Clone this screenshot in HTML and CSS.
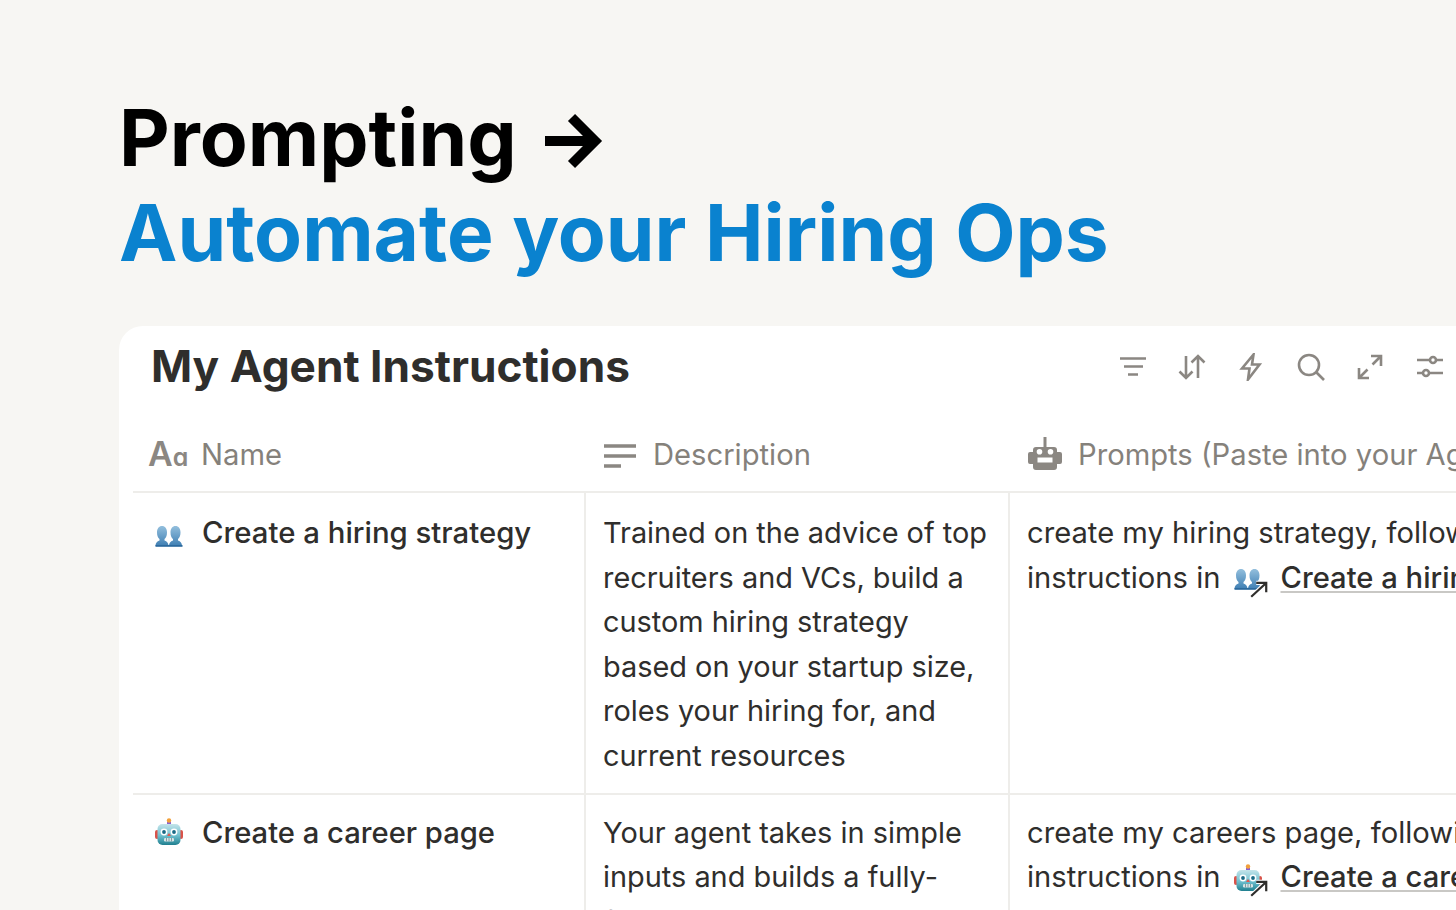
FILE: index.html
```html
<!DOCTYPE html>
<html lang="en">
<head>
    <meta charset="UTF-8">
    <title>Automate your Hiring Ops</title>
    <link rel="stylesheet" href="styles.css">
</head>
<body>
    <svg class="sprites" width="0" height="0">
        <defs>
            <symbol id="busts" viewBox="0 0 28 22">
                <defs>
                    <linearGradient id="bust-fill" x1="0" y1="0" x2="0" y2="1">
                        <stop offset="0" stop-color="#93bfdd"/>
                        <stop offset="1" stop-color="#3f7fb3"/>
                    </linearGradient>
                </defs>
                <path fill="url(#bust-fill)" d="M.5 21c0-3 1.500-4.500 4-5.500v-1.500C3 13 2 10.500 2 7.500 2 3.500 4 1 7 1s5 2.500 5 6.500c0 3-1 5.500-2.500 6.500v1.500c2.500 1 4 2.500 4 5.500z"/>
                <path fill="url(#bust-fill)" d="M14 21c0-3 1.500-4.500 4-5.500v-1.500c-1.500-1-2.500-3.500-2.500-6.500 0-4 2-6.500 5-6.500s5 2.500 5 6.500c0 3-1 5.500-2.500 6.500v1.500c2.500 1 4 2.500 4 5.500z"/>
                <rect x=".5" y="20" width="27" height="1.800" fill="#2c6a9e"/>
            </symbol>
            <symbol id="robot" viewBox="0 0 28 28">
                <defs>
                    <linearGradient id="robot-fill" x1="0" y1="0" x2="0" y2="1">
                        <stop offset="0" stop-color="#c4e4ea"/>
                        <stop offset=".55" stop-color="#6fc0cf"/>
                        <stop offset="1" stop-color="#1f7f8f"/>
                    </linearGradient>
                </defs>
                <rect x="12" y="3.500" width="4" height="3" fill="#8a5fd0"/>
                <circle cx="14" cy="2.500" r="2.200" fill="#f2a03a"/>
                <rect x="0" y="12" width="4" height="9" rx="2" fill="#d9534a"/>
                <rect x="24" y="12" width="4" height="9" rx="2" fill="#d9534a"/>
                <rect x="2.500" y="6" width="23" height="21" rx="5" fill="url(#robot-fill)"/>
                <circle cx="9" cy="14" r="3.400" fill="#fff"/>
                <circle cx="19" cy="14" r="3.400" fill="#fff"/>
                <circle cx="9" cy="14" r="1.900" fill="#1a6a86"/>
                <circle cx="19" cy="14" r="1.900" fill="#1a6a86"/>
                <path d="M14 15l2 3h-4z" fill="#e0574f"/>
                <rect x="9" y="20" width="10" height="3.400" rx="1.200" fill="#d7e4e6"/>
                <path d="M11.500 20v3.400M14 20v3.400M16.500 20v3.400" stroke="#6b8a90" stroke-width=".8"/>
            </symbol>
            <symbol id="link-arrow" viewBox="0 0 18 16">
                <path d="M2 15L15 3M6.500 2.500H15.500V11" fill="none" stroke="#fff" stroke-width="4"/>
                <path d="M2 15L15 3M6.500 2.500H15.500V11" fill="none" stroke="#2f2e2c" stroke-width="2"/>
            </symbol>
        </defs>
    </svg>

    <header class="headline">
        <h1 class="title-line">
            Prompting
            <svg class="title-arrow" viewBox="0 0 58 56" width="58" height="56"><path d="M0 28H50M26.500 4.500L50 28 26.500 51.500" fill="none" stroke="#000" stroke-width="10"/></svg>
        </h1>
        <h1 class="title-line title-blue">Automate your Hiring Ops</h1>
    </header>

    <main class="card">
        <div class="card-head">
            <h2 class="card-title">My Agent Instructions</h2>
            <div class="tools">
                <svg viewBox="0 0 28 28"><path d="M1 5.500H27M5 13.500H24M9 21.500H19"/></svg>
                <svg viewBox="0 0 28 28"><path d="M8 3V25M1.500 18.500L8 25 14.500 18.500M20 25V3M13.500 9.500L20 3 26.500 9.500"/></svg>
                <svg viewBox="0 0 28 28"><path d="M15.500 1.500L4 15.500H11.500L10 26.500 21.500 11.500H14z"/></svg>
                <svg viewBox="0 0 28 28"><circle cx="12" cy="12" r="10"/><path d="M19.500 19.500L27 27"/></svg>
                <svg viewBox="0 0 28 28"><path d="M2 25L10.500 16.500M2 15V25H12M24 3L15.500 11.500M14 3H24V13"/></svg>
                <svg viewBox="0 0 28 28"><path d="M1 7H14M20 7H27M1 20H7M13 20H27"/><circle cx="17" cy="7" r="3"/><circle cx="10" cy="20" r="3"/></svg>
            </div>
        </div>

        <div class="table">
            <div class="row row-head">
                <div class="cell head-cell">
                    <span class="aa"><span>A</span><span class="aa-small">a</span></span>
                    Name
                </div>
                <div class="cell head-cell head-desc">
                    <svg class="head-icon" viewBox="0 0 32 26" width="32" height="26"><path d="M0 3H32M0 13H32M0 23H17"/></svg>
                    Description
                </div>
                <div class="cell head-cell head-prompt">
                    <svg class="bot-icon" viewBox="0 0 34 33" width="34" height="33">
                        <path fill="#8b8782" fill-rule="evenodd" d="M15.500 0h3v10H26a3 3 0 0 1 3 3v2h3a2 2 0 0 1 2 2v8a2 2 0 0 1-2 2h-3v3a3 3 0 0 1-3 3H8a3 3 0 0 1-3-3v-3H2a2 2 0 0 1-2-2v-8a2 2 0 0 1 2-2h3v-2a3 3 0 0 1 3-3h7.500zM11.500 12a2.800 2.800 0 1 0 0 5.600 2.800 2.800 0 0 0 0-5.600zm11 0a2.800 2.800 0 1 0 0 5.600 2.800 2.800 0 0 0 0-5.600zM9.500 20.500v5h15v-5z"/>
                    </svg>
                    Prompts (Paste into your Agent)
                </div>
            </div>

            <div class="row row-first">
                <div class="cell name-cell">
                    <svg class="emoji"><use href="#busts"/></svg>
                    Create a hiring strategy
                </div>
                <div class="cell text-cell">Trained on the advice of top recruiters and VCs, build a custom hiring strategy based on your startup size, roles your hiring for, and current resources</div>
                <div class="cell prompt-cell">
                    create my hiring strategy, following the<br>
                    instructions in
                    <span class="page-link">
                        <span class="link-icon"><svg class="emoji"><use href="#busts"/></svg><svg class="arrow-badge"><use href="#link-arrow"/></svg></span>
                        <span class="link-text">Create a hiring strategy</span>
                    </span>
                </div>
            </div>

            <div class="row row-second">
                <div class="cell name-cell">
                    <svg class="emoji"><use href="#robot"/></svg>
                    Create a career page
                </div>
                <div class="cell text-cell">Your agent takes in simple inputs and builds a fully-finished careers page with</div>
                <div class="cell prompt-cell">
                    create my careers page, following the<br>
                    instructions in
                    <span class="page-link">
                        <span class="link-icon"><svg class="emoji"><use href="#robot"/></svg><svg class="arrow-badge"><use href="#link-arrow"/></svg></span>
                        <span class="link-text">Create a career page</span>
                    </span>
                </div>
            </div>
        </div>
    </main>
</body>
</html>
```

FILE: styles.css
```css
* {
    box-sizing: border-box;
}

html, body {
    height: 100%;
    margin: 0;
    overflow: hidden;
}

body {
    background-color: #f7f6f3;
    font-family: Inter, "Liberation Sans", sans-serif;
    color: #2f2e2c;
    padding: 90px 0 0 119px;
}

.sprites {
    position: absolute;
}

/* Titre */
.headline {
    margin-bottom: 46px;
}

.title-line {
    margin: 0;
    font-size: 78.300px;
    line-height: 95px;
    font-weight: 700;
    color: #000;
    white-space: nowrap;
    display: flex;
    align-items: center;
}

.title-arrow {
    margin-left: 28px;
    margin-top: 7px;
}

.title-blue {
    color: #0a82cf;
}

/* Carte */
.card {
    width: 1400px;
    height: 700px;
    background-color: #fff;
    border-radius: 24px;
    padding-left: 14px;
}

.card-head {
    display: flex;
    align-items: center;
    height: 80px;
    padding-left: 18px;
}

.card-title {
    margin: 0;
    width: 968px;
    font-size: 44.200px;
    line-height: 80px;
    font-weight: 700;
    color: #2f2e2c;
}

.tools {
    display: flex;
    gap: 31.400px;
    margin-top: 2px;
}

.tools svg {
    width: 28px;
    height: 28px;
    fill: none;
    stroke: #8b8782;
    stroke-width: 2.600;
}

/* Tableau */
.row {
    display: grid;
    grid-template-columns: 451px 424px 500px;
    border-bottom: 2px solid #eeedea;
}

.row-head {
    height: 87px;
}

.row-first {
    height: 302px;
}

.cell {
    font-size: 29.200px;
    line-height: 44.600px;
    padding: 18px 17px 0;
    white-space: nowrap;
}

.row-second .cell {
    padding-top: 15.500px;
}

.cell + .cell {
    border-left: 2px solid #eeedea;
}

.head-cell {
    display: flex;
    align-items: center;
    gap: 17px;
    padding: 14px 0 0;
    color: #85817b;
    border-left: 0 !important;
}

.head-cell:first-child {
    padding-left: 15px;
    gap: 19px;
}

.head-desc {
    padding-left: 20px;
}

.head-prompt {
    padding-left: 20px;
    gap: 16px;
}

.head-icon {
    flex: none;
    fill: none;
    stroke: #8b8782;
    stroke-width: 3.400;
}

.bot-icon {
    flex: none;
    margin-top: -4px;
}

.aa {
    display: inline-flex;
    align-items: baseline;
    width: 34px;
    font-size: 34px;
    font-weight: 600;
    color: #8b8782;
    font-feature-settings: "cv11";
}

.aa-small {
    font-size: 25px;
}

.name-cell {
    display: flex;
    align-items: flex-start;
    gap: 19px;
    padding-left: 22px;
    font-size: 29.350px;
    font-weight: 500;
}

.row-second .name-cell {
    font-size: 29.200px;
}

.emoji {
    width: 28px;
    height: 28px;
    flex: none;
    margin-top: 11px;
}

.row-second .emoji {
    margin-top: 7px;
}

.text-cell {
    font-size: 28.900px;
    white-space: normal;
    padding-right: 8px;
}

.page-link {
    font-weight: 500;
    margin-left: 5px;
}

.link-icon {
    display: inline-block;
    position: relative;
    width: 34px;
    height: 30px;
    vertical-align: -7px;
    margin-right: 5px;
}

.link-icon .emoji {
    margin: 0;
    display: block;
}

.arrow-badge {
    position: absolute;
    right: -1px;
    bottom: -3px;
    width: 20px;
    height: 18px;
}

.link-text {
    text-decoration: underline;
    text-decoration-color: #c9c8c5;
    text-decoration-thickness: 2px;
    text-underline-offset: 3px;
    text-decoration-skip-ink: none;
}
```
